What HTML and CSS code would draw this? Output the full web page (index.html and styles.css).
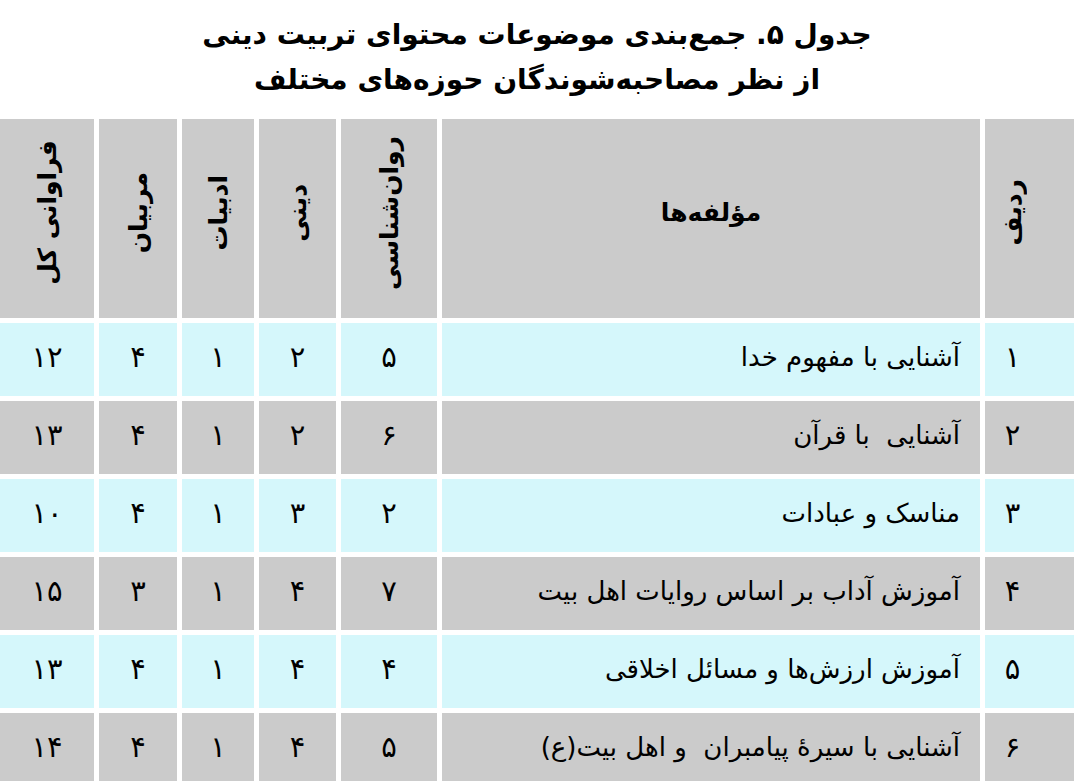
FILE: index.html
```html
<!DOCTYPE html>
<html lang="fa">
<head>
<meta charset="utf-8">
<title>جدول ۵</title>
<link rel="stylesheet" href="styles.css">
</head>
<body>
<div class="page">
  <h1 class="title">جدول ۵. جمع‌بندی موضوعات محتوای تربیت دینی<br>از نظر مصاحبه‌شوندگان حوزه‌های مختلف</h1>
  <div class="grid">
    <div class="cell head idx"><span class="vt">ردیف</span></div>
    <div class="cell head"><span>مؤلفه‌ها</span></div>
    <div class="cell head"><span class="vt">روان‌شناسی</span></div>
    <div class="cell head"><span class="vt">دینی</span></div>
    <div class="cell head"><span class="vt">ادبیات</span></div>
    <div class="cell head"><span class="vt">مربیان</span></div>
    <div class="cell head"><span class="vt">فراوانی کل</span></div>

    <div class="cell c idx num">۱</div>
    <div class="cell c txt">آشنایی با مفهوم خدا</div>
    <div class="cell c num">۵</div>
    <div class="cell c num">۲</div>
    <div class="cell c num">۱</div>
    <div class="cell c num">۴</div>
    <div class="cell c num">۱۲</div>

    <div class="cell g idx num">۲</div>
    <div class="cell g txt">آشنایی&nbsp; با قرآن</div>
    <div class="cell g num">۶</div>
    <div class="cell g num">۲</div>
    <div class="cell g num">۱</div>
    <div class="cell g num">۴</div>
    <div class="cell g num">۱۳</div>

    <div class="cell c idx num">۳</div>
    <div class="cell c txt">مناسک و عبادات</div>
    <div class="cell c num">۲</div>
    <div class="cell c num">۳</div>
    <div class="cell c num">۱</div>
    <div class="cell c num">۴</div>
    <div class="cell c num">۱۰</div>

    <div class="cell g idx num">۴</div>
    <div class="cell g txt">آموزش آداب بر اساس روایات اهل بیت</div>
    <div class="cell g num">۷</div>
    <div class="cell g num">۴</div>
    <div class="cell g num">۱</div>
    <div class="cell g num">۳</div>
    <div class="cell g num">۱۵</div>

    <div class="cell c idx num">۵</div>
    <div class="cell c txt">آموزش ارزش‌ها و مسائل اخلاقی</div>
    <div class="cell c num">۴</div>
    <div class="cell c num">۴</div>
    <div class="cell c num">۱</div>
    <div class="cell c num">۴</div>
    <div class="cell c num">۱۳</div>

    <div class="cell g idx num">۶</div>
    <div class="cell g txt">آشنایی با سیرهٔ پیامبران&nbsp; و اهل بیت(ع)</div>
    <div class="cell g num">۵</div>
    <div class="cell g num">۴</div>
    <div class="cell g num">۱</div>
    <div class="cell g num">۴</div>
    <div class="cell g num">۱۴</div>
  </div>
</div>
</body>
</html>
```

FILE: styles.css
```css
html, body {
  margin: 0;
  padding: 0;
  background: #ffffff;
}
body {
  font-family: "DejaVu Sans", sans-serif;
  color: #000000;
  overflow: hidden;
}
.page {
  width: 1074px;
  height: 781px;
  overflow: hidden;
}
.title {
  margin: 0;
  height: 119px;
  box-sizing: border-box;
  padding-top: 12px;
  direction: rtl;
  text-align: center;
  font-size: 28px;
  line-height: 45px;
  font-weight: bold;
}
.grid {
  direction: rtl;
  display: grid;
  width: 1080px;
  grid-template-columns: 95px 538px 96px 77px 72px 78px 94px;
  grid-template-rows: 199px repeat(6, 73px);
  gap: 5px;
}
.cell {
  display: flex;
  align-items: center;
  justify-content: center;
  box-sizing: border-box;
  padding-bottom: 6px;
}
.head {
  background: #cbcbcb;
  font-size: 25px;
  font-weight: bold;
  padding-bottom: 12px;
}
.vt {
  writing-mode: vertical-rl;
  transform: rotate(180deg);
  white-space: nowrap;
}
.c { background: #d5f7fb; }
.g { background: #cbcbcb; }
.num { font-size: 29px; }
.txt {
  justify-content: flex-start;
  padding-right: 20px;
  font-size: 26px;
}
.idx {
  padding-right: 40px;
}
```
